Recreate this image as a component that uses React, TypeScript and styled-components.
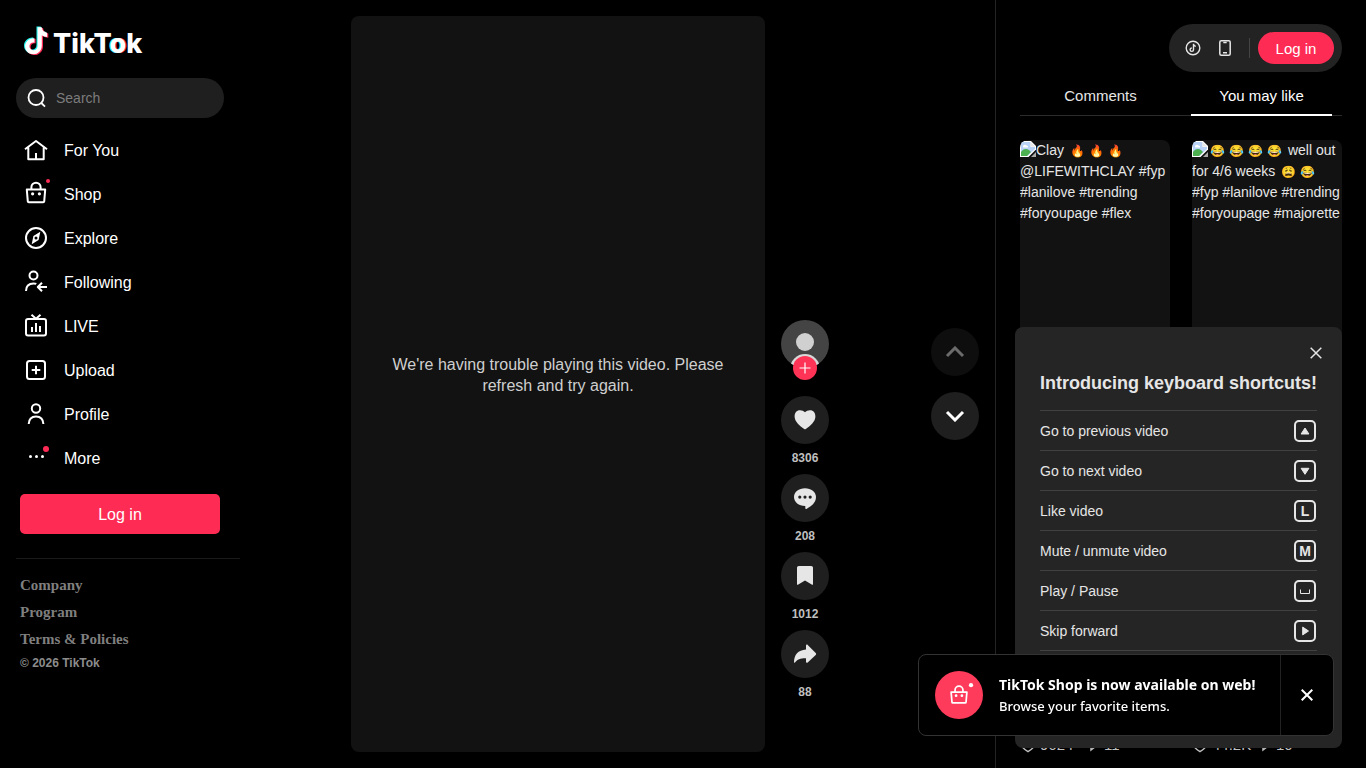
import React from "react";
import styled, { createGlobalStyle, css } from "styled-components";

const sans = `"Liberation Sans", Arial, sans-serif`;
const display = `"Noto Sans", "Open Sans", sans-serif`;

const GlobalStyle = createGlobalStyle`
  * { box-sizing: border-box; }
  body {
    margin: 0;
    background: #000;
    color: #fff;
    font-family: ${sans};
    overflow: hidden;
  }
  button { font-family: inherit; border: 0; cursor: pointer; padding: 0; color: inherit; background: none; }
  a { color: inherit; text-decoration: none; }
  svg { display: block; flex: none; }
`;

const Page = styled.div`
  display: flex;
  height: 100vh;
  overflow: hidden;
`;

/* ---------- left sidebar ---------- */

const Sidebar = styled.aside`
  flex: 0 0 240px;
  min-width: 0;
  display: flex;
  flex-direction: column;
  padding: 24px 0 16px 16px;
`;

const Logo = styled.a`
  display: flex;
  align-items: center;
  height: 34px;
  margin: 0 0 20px 7px;
`;

const Wordmark = styled.span`
  font: 800 27px/34px Inter, sans-serif;
  margin: 6px 0 0 4px;
`;

const TintedLetter = styled.span`
  text-shadow: -1px 0 #25f4ee, 1px 0 #fe2c55;
`;

const SearchBox = styled.label`
  display: flex;
  align-items: center;
  gap: 8px;
  height: 40px;
  margin-right: 16px;
  padding: 0 8px;
  border-radius: 20px;
  background: #1f1f1f;
`;

const SearchInput = styled.input`
  flex: 1;
  width: 100%;
  min-width: 0;
  padding: 0;
  border: 0;
  outline: 0;
  background: none;
  color: #fff;
  font: 14px/20px ${sans};
  &::placeholder { color: #7c7c7c; opacity: 1; }
`;

const Nav = styled.nav`
  display: flex;
  flex-direction: column;
  gap: 4px;
  margin-top: 13px;
`;

const NavLink = styled.a`
  display: flex;
  align-items: center;
  gap: 16px;
  height: 40px;
  padding-left: 8px;
  font-size: 16px;
  line-height: 24px;
`;

const NavIcon = styled.span`
  width: 24px;
  height: 24px;
  display: flex;
  align-items: flex-end;
  svg { overflow: visible; }
`;

const SidebarLogin = styled.button`
  height: 40px;
  margin: 15px 20px 24px 4px;
  padding-top: 2px;
  border-radius: 5px;
  background: #fe2c55;
  font-size: 16px;
`;

const Footer = styled.footer`
  display: flex;
  flex-direction: column;
  border-top: 1px solid #1a1a1a;
  padding: 13px 0 0 4px;
  color: #7f7f7f;
`;

const FooterLink = styled.a`
  font: bold 15px/27px "Liberation Serif", serif;
`;

const Copyright = styled.small`
  font: bold 12px/20px ${sans};
  color: #8c8c8c;
`;

/* ---------- feed ---------- */

const Feed = styled.main`
  flex: 1;
  min-width: 0;
  display: flex;
  padding: 16px 16px 16px 9px;
`;

const Stage = styled.section`
  flex: 1;
  display: flex;
  justify-content: center;
  gap: 16px;
`;

const Video = styled.div`
  height: 100%;
  aspect-ratio: 9 / 16;
  display: flex;
  align-items: center;
  justify-content: center;
  padding: 0 32px 18px;
  border-radius: 8px;
  background: #121212;
  color: #cfcfcf;
  font-size: 16px;
  line-height: 21px;
  text-align: center;
`;

const Actions = styled.div`
  display: flex;
  flex-direction: column;
  justify-content: flex-end;
  align-items: center;
  width: 48px;
  padding-bottom: 44px;
`;

const Avatar = styled.a`
  width: 48px;
  height: 48px;
`;

const Creator = styled.div`
  position: relative;
  margin-bottom: 28px;
`;

const FollowButton = styled.button`
  position: absolute;
  left: 12px;
  top: 36px;
  width: 24px;
  height: 24px;
  display: grid;
  place-items: center;
  border-radius: 50%;
  background: #ff3355;
`;

const RoundButton = styled.button<{ $dim?: boolean }>`
  width: 48px;
  height: 48px;
  display: grid;
  place-items: center;
  border-radius: 50%;
  background: ${(p) => (p.$dim ? "#0e0e0e" : "#1f1f1f")};
`;

const Count = styled.strong`
  margin: 6px 0 8px;
  font-size: 12px;
  line-height: 16px;
  color: #bfbfbf;
`;

const Pager = styled.div`
  display: flex;
  flex-direction: column;
  justify-content: center;
  gap: 16px;
`;

/* ---------- right panel ---------- */

const Panel = styled.aside`
  flex: 0 0 371px;
  display: flex;
  flex-direction: column;
  padding: 24px 24px 0;
  border-left: 1px solid #242424;
`;

const AccountBar = styled.div`
  align-self: flex-end;
  display: flex;
  align-items: center;
  height: 48px;
  padding: 0 8px;
  border-radius: 24px;
  background: #232323;
`;

const BarButton = styled.button`
  width: 32px;
  height: 32px;
  display: grid;
  place-items: center;
`;

const BarDivider = styled.span`
  width: 1px;
  height: 20px;
  margin: 0 8px;
  background: #444;
`;

const LoginPill = styled.button`
  width: 76px;
  height: 32px;
  border-radius: 16px;
  background: #fe2c55;
  font-size: 15px;
`;

const Tabs = styled.div`
  display: flex;
  height: 44px;
  margin-bottom: 24px;
  border-bottom: 1px solid #2b2b2b;
`;

const Tab = styled.button<{ $active?: boolean }>`
  flex: 1;
  height: 44px;
  margin: 0 10px;
  padding-top: 4px;
  font-size: 15px;
  color: #e6e6e6;
  border-bottom: 2px solid transparent;
  ${(p) => p.$active && css`color: #fff; border-bottom-color: #fff;`}
`;

const Suggestions = styled.div`
  display: grid;
  grid-template-columns: 1fr 1fr;
  gap: 27px 22px;
`;

const Suggestion = styled.article`
  min-width: 0;
  display: flex;
  flex-direction: column;
  gap: 8px;
`;

const Thumb = styled.a`
  display: block;
  height: 266px;
  border-radius: 8px;
  background: #121212;
  color: #e6e6e6;
  font: 14px/21px ${sans};
  overflow: hidden;
`;

const ThumbLine = styled.div`
  height: 21px;
  white-space: nowrap;
  svg { display: inline-block; vertical-align: -2px; }
`;

const Emoji = styled.span`
  display: inline-block;
  width: 19px;
  text-align: center;
  font-size: 12px;
  line-height: 16px;
`;

const Stats = styled.div`
  display: flex;
  align-items: center;
  gap: 6px;
  height: 20px;
  font-size: 15px;
  line-height: 20px;
  color: #bfbfbf;
`;

const Stat = styled.span`
  width: 60px;
  display: flex;
  align-items: center;
  gap: 4px;
`;

/* ---------- overlays ---------- */

const Shortcuts = styled.section`
  position: fixed;
  right: 24px;
  bottom: 20px;
  width: 327px;
  min-height: 421px;
  padding: 14px 25px 0;
  border-radius: 8px;
  background: #252525;
  color: #e6e6e6;
  display: flex;
  flex-direction: column;
`;

const ShortcutsClose = styled.button`
  align-self: flex-end;
  width: 24px;
  height: 24px;
  margin-right: -11px;
  display: grid;
  place-items: center;
`;

const ShortcutsTitle = styled.h2`
  margin: 6px 0 15px;
  font-size: 18px;
  line-height: 24px;
  white-space: nowrap;
`;

const ShortcutList = styled.ul`
  margin: 0;
  padding: 0;
  list-style: none;
  border-bottom: 1px solid #414141;
`;

const ShortcutRow = styled.li`
  display: flex;
  align-items: center;
  justify-content: space-between;
  height: 40px;
  border-top: 1px solid #414141;
  font-size: 14px;
`;

const Key = styled.kbd`
  width: 22px;
  height: 22px;
  margin-right: 1px;
  display: grid;
  place-items: center;
  border: 2px solid #e6e6e6;
  border-radius: 5px;
  font: bold 14px/18px ${sans};
`;

const Toast = styled.section`
  position: fixed;
  right: 32px;
  bottom: 32px;
  width: 416px;
  height: 82px;
  display: flex;
  border: 1px solid #333;
  border-radius: 8px;
  background: #000;
  font-family: ${display};
`;

const ToastBody = styled.div`
  flex: 1;
  display: flex;
  align-items: center;
  gap: 16px;
  padding-left: 16px;
`;

const ToastBadge = styled.span`
  width: 48px;
  height: 48px;
  display: grid;
  place-items: center;
  border-radius: 50%;
  background: #ff3b5c;
`;

const ToastTitle = styled.h3`
  margin: 0;
  font-size: 14px;
  font-weight: 700;
  line-height: 22px;
`;

const ToastText = styled.p`
  margin: 0;
  font-size: 13px;
  font-weight: 500;
  line-height: 20px;
`;

const ToastClose = styled.button`
  width: 53px;
  display: grid;
  place-items: center;
  border-left: 1px solid #222;
`;

/* ---------- icons ---------- */

const notePath = "M15 1h4.2c.3 3 2 5 5.3 5.4v4.3c-2 0-3.800-.6-5.300-1.700v10.200c0 5-3.700 8.800-8.400 8.800S2.500 24.500 2.500 20s4-8.600 9.300-8.100v4.400c-2.700-.6-5 1.200-5 3.700 0 2.300 1.700 4 4.100 4s4.100-1.700 4.100-4.500z";

const NoteMark = () => (
  <svg width="26" height="32" viewBox="0 0 26 32" aria-hidden="true">
    <path d={notePath} fill="#25f4ee" transform="translate(-1.500 .6)" />
    <path d={notePath} fill="#fe2c55" transform="translate(.8 2)" />
    <path d={notePath} fill="#fff" transform="translate(-.4 1.300)" />
  </svg>
);

const Line = ({ children, size = 24, width = 2 }: { children: React.ReactNode; size?: number; width?: number }) => (
  <svg width={size} height={size} viewBox="0 0 24 24" fill="none" stroke="currentColor" strokeWidth={width} strokeLinecap="butt" strokeLinejoin="round" aria-hidden="true">
    {children}
  </svg>
);

const Bag = () => (
  <>
    <path d="M2.800 8.600h18.400l-1 11.800a1 1 0 0 1-1 .9H4.800a1 1 0 0 1-1-.9z" />
    <path d="M7.400 8.400V6.300a4.600 4.600 0 0 1 9.200 0v2.100" />
    <circle cx="8.600" cy="12.800" r="1.600" fill="currentColor" stroke="none" />
    <circle cx="15.400" cy="12.800" r="1.600" fill="currentColor" stroke="none" />
  </>
);

const navItems: { label: string; icon: React.ReactNode }[] = [
  {
    label: "For You",
    icon: <Line><path d="M1 10.200 12 2l11 8.200M4.300 8.500v11.800h15.400V8.500M12 20V14" /></Line>,
  },
  {
    label: "Shop",
    icon: (
      <svg width="26" height="28" viewBox="0 0 26 28" fill="none" stroke="currentColor" strokeWidth="2" strokeLinejoin="round" aria-hidden="true">
        <g transform="translate(0 2)"><Bag /></g>
        <circle cx="24" cy="2" r="2" fill="#fe2c55" stroke="none" />
      </svg>
    ),
  },
  {
    label: "Explore",
    icon: (
      <Line>
        <circle cx="12" cy="11" r="10" />
        <path fillRule="evenodd" stroke="none" fill="currentColor" d="M16.300 4.700 14.600 13.100 7.700 17.300l1.700-8.400zM12 9.500a1.500 1.500 0 1 0 0 3 1.500 1.500 0 0 0 0-3z" />
      </Line>
    ),
  },
  {
    label: "Following",
    icon: (
      <Line>
        <circle cx="9.500" cy="4.500" r="4" />
        <path d="M2 20c0-5 2.700-7.600 7.500-7.600 1.200 0 2 .1 2.800.5M23 16h-8.500M18 11.800 13.800 16l4.200 4.200" />
      </Line>
    ),
  },
  {
    label: "LIVE",
    icon: (
      <Line>
        <rect x="2" y="4" width="20" height="16.500" rx="2" />
        <path d="m7.500-.2 4.500 4 4.500-4M8 12v5M12 8v9M16 11v6" />
      </Line>
    ),
  },
  {
    label: "Upload",
    icon: <Line><rect x="3" y="2" width="18" height="18" rx="2.500" /><path d="M12 6.700v8.600M7.700 11h8.600" /></Line>,
  },
  {
    label: "Profile",
    icon: <Line><circle cx="12" cy="5.500" r="4.200" /><path d="M4.700 21c.2-5 2.700-7.600 7.300-7.600s7.200 2.600 7.400 7.600" /></Line>,
  },
  {
    label: "More",
    icon: (
      <svg width="24" height="24" viewBox="0 0 24 24" fill="currentColor" aria-hidden="true">
        <circle cx="6.500" cy="9.500" r="1.500" /><circle cx="12.500" cy="9.500" r="1.500" /><circle cx="18.500" cy="9.500" r="1.500" />
        <circle cx="22" cy="2" r="3" fill="#fe2c55" />
      </svg>
    ),
  },
];

const Cross = ({ size = 12, width = 2 }: { size?: number; width?: number }) => (
  <svg width={size} height={size} viewBox="0 0 12 12" stroke="currentColor" strokeWidth={width} aria-hidden="true">
    <path d="m.7.7 10.600 10.600M11.300.7.7 11.300" />
  </svg>
);

const Solid = ({ d }: { d: string }) => (
  <svg width="24" height="24" viewBox="0 0 24 24" fill="#e6e6e6" fillRule="evenodd" aria-hidden="true"><path d={d} /></svg>
);

const actions = [
  { label: "Like", count: "8306", d: "M7 2.200c2 0 3.800.8 5 2 1.200-1.200 3-2 5-2 3.500 0 5.400 2.700 5.400 6.200 0 4.900-5.100 9.700-9.600 12.500a1.600 1.600 0 0 1-1.600 0C6.700 18.100 1.600 13.300 1.600 8.400 1.600 4.900 3.500 2.200 7 2.200z" },
  { label: "Comment", count: "208", d: "M12 2.200c6.200 0 11 3.700 11 8.900 0 5.600-4.800 9.500-9.500 11.800-.6.300-1.200 0-1.200-.6v-2.200H12C5.800 20.100 1 16.200 1 11.100S5.800 2.200 12 2.200zM6.800 9.500a1.600 1.600 0 1 0 0 3.200 1.600 1.600 0 0 0 0-3.200zm5.200 0a1.600 1.600 0 1 0 0 3.200 1.600 1.600 0 0 0 0-3.200zm5.200 0a1.600 1.600 0 1 0 0 3.200 1.600 1.600 0 0 0 0-3.200z" },
  { label: "Save", count: "1012", d: "M4 3.800C4 2.800 4.800 2 5.800 2h12.400c1 0 1.800.8 1.800 1.800v16.400c0 .4-.5.700-.9.500L12 16.500l-7.100 4.200c-.4.200-.9-.1-.9-.5z" },
  { label: "Share", count: "88", d: "M13 3.700c0-1 1-1.400 1.700-.8l8 8.100c.6.600.6 1.400 0 2l-8 7.400c-.7.700-1.700.2-1.700-.7v-3.400c-5.500-.1-8.600 1.100-11 4.200-.3.400-1 .2-1-.3C1 13 5 8.100 13 7.600z" },
];

const ImageMissing = () => (
  <svg width="16" height="16" viewBox="0 0 16 16" aria-hidden="true">
    <path d="M0 0h11l5 5v3.500L8.500 16H0z" fill="#fff" />
    <path d="M1 1h9.500v5H15v2L7.500 15H1z" fill="#b9d2f7" />
    <path d="M1 15v-4c2-3 5-4 8-2l2 2-4 4z" fill="#4caf50" />
    <path d="M3 5.500a2 2 0 0 1 3.500-1A1.500 1.500 0 0 1 8 6.500H3.200z" fill="#fff" />
    <path d="M10.500 1v4.500H15z" fill="#e8e8e8" />
    <path d="M11 15.900 16 11v4.900z" fill="#a9a9a9" />
  </svg>
);

const suggestions: { lines: string[]; likes?: string; plays?: string }[] = [
  { lines: ["Clay 🔥🔥🔥", "@LIFEWITHCLAY #fyp", "#lanilove #trending", "#foryoupage #flex"] },
  { lines: ["😂😂😂😂 well out", "for 4/6 weeks 😩😂", "#fyp #lanilove #trending", "#foryoupage #majorette"] },
  { lines: [], likes: "9624", plays: "11" },
  { lines: [], likes: "44.2K", plays: "10" },
];

const withEmoji = (line: string) =>
  line.split(/(\p{Extended_Pictographic})/u).map((part, i) => (i % 2 ? <Emoji key={i}>{part}</Emoji> : part));

const Glyph = ({ d, stroke }: { d: string; stroke?: boolean }) => (
  <svg width="12" height="12" viewBox="0 0 12 12" fill={stroke ? "none" : "currentColor"} stroke="currentColor" strokeWidth="1" strokeLinejoin="round" aria-hidden="true"><path d={d} /></svg>
);

const shortcuts: { label: string; key: React.ReactNode }[] = [
  { label: "Go to previous video", key: <Glyph d="M6 3 9.900 9H2.100z" /> },
  { label: "Go to next video", key: <Glyph d="M6 9.300 2.100 3.300h7.800z" /> },
  { label: "Like video", key: "L" },
  { label: "Mute / unmute video", key: "M" },
  { label: "Play / Pause", key: <Glyph stroke d="M1.500 4.500v4h9v-4" /> },
  { label: "Skip forward", key: <Glyph d="M9.500 6 3.700 2.100v7.800z" /> },
];

export default function App() {
  return (
    <Page>
      <GlobalStyle />
      <Sidebar>
        <Logo href="#" aria-label="TikTok">
          <NoteMark />
          <Wordmark>TikT<TintedLetter>o</TintedLetter>k</Wordmark>
        </Logo>
        <SearchBox>
          <Line width={1.8}><circle cx="12" cy="11.500" r="7.500" /><path d="m17.300 17 3.700 3.700" /></Line>
          <SearchInput type="search" placeholder="Search" aria-label="Search" />
        </SearchBox>
        <Nav>
          {navItems.map((item) => (
            <NavLink href="#" key={item.label}>
              <NavIcon>{item.icon}</NavIcon>
              {item.label}
            </NavLink>
          ))}
        </Nav>
        <SidebarLogin>Log in</SidebarLogin>
        <Footer>
          <FooterLink href="#">Company</FooterLink>
          <FooterLink href="#">Program</FooterLink>
          <FooterLink href="#">Terms &amp; Policies</FooterLink>
          <Copyright>© 2026 TikTok</Copyright>
        </Footer>
      </Sidebar>

      <Feed>
        <Stage>
          <Video>We're having trouble playing this video. Please refresh and try again.</Video>
          <Actions>
            <Creator>
              <Avatar href="#" aria-label="Creator profile">
                <svg width="48" height="48" viewBox="0 0 48 48" aria-hidden="true">
                  <clipPath id="avatar"><circle cx="24" cy="24" r="24" /></clipPath>
                  <g clipPath="url(#avatar)">
                    <rect width="48" height="48" fill="#444" />
                    <circle cx="24" cy="22" r="9" fill="#d0d0d0" />
                    <circle cx="24" cy="49" r="15" fill="#d8d8d8" />
                  </g>
                </svg>
              </Avatar>
              <FollowButton aria-label="Follow">
                <svg width="12" height="12" viewBox="0 0 12 12" stroke="#fff" strokeWidth="1.200" aria-hidden="true"><path d="M6 .5v11M.5 6h11" /></svg>
              </FollowButton>
            </Creator>
            {actions.map((a) => (
              <React.Fragment key={a.label}>
                <RoundButton aria-label={a.label}><Solid d={a.d} /></RoundButton>
                <Count>{a.count}</Count>
              </React.Fragment>
            ))}
          </Actions>
        </Stage>
        <Pager>
          <RoundButton $dim disabled aria-label="Previous video">
            <svg width="20" height="12" viewBox="0 0 20 12" fill="none" stroke="#6b6b6b" strokeWidth="3" aria-hidden="true"><path d="m2 10 8-8 8 8" /></svg>
          </RoundButton>
          <RoundButton aria-label="Next video">
            <svg width="20" height="12" viewBox="0 0 20 12" fill="none" stroke="#fff" strokeWidth="3" aria-hidden="true"><path d="m2 2 8 8 8-8" /></svg>
          </RoundButton>
        </Pager>
      </Feed>

      <Panel>
        <AccountBar>
          <BarButton aria-label="Get coins">
            <svg width="16" height="16" viewBox="0 0 16 16" fill="none" stroke="#e6e6e6" strokeWidth="1.400" aria-hidden="true">
              <circle cx="8" cy="8" r="6.800" />
              <path d="M8.500 3.800v5.900a1.700 1.700 0 1 1-1.700-1.700M8.500 4.200c.2 1.300 1 2 2.300 2.200" />
            </svg>
          </BarButton>
          <BarButton aria-label="Get app">
            <svg width="12" height="16" viewBox="0 0 12 16" fill="none" stroke="#e6e6e6" strokeWidth="1.500" aria-hidden="true">
              <rect x=".8" y=".8" width="10.400" height="14.400" rx="1.500" />
              <path d="M4.300 2.500h3.400M4 12.700h4" />
            </svg>
          </BarButton>
          <BarDivider />
          <LoginPill>Log in</LoginPill>
        </AccountBar>
        <Tabs role="tablist">
          <Tab role="tab" aria-selected="false">Comments</Tab>
          <Tab role="tab" aria-selected="true" $active>You may like</Tab>
        </Tabs>
        <Suggestions>
          {suggestions.map((s, i) => (
            <Suggestion key={i}>
              <Thumb href="#" aria-label="Suggested video">
                {s.lines.map((line, n) => (
                  <ThumbLine key={line}>{n === 0 && <ImageMissing />}{withEmoji(line)}</ThumbLine>
                ))}
              </Thumb>
              <Stats>
                {s.likes && (
                  <>
                    <Stat>
                      <svg width="16" height="16" viewBox="0 0 24 24" fill="none" stroke="currentColor" strokeWidth="2" aria-hidden="true"><path d="M7 3c2 0 3.800.8 5 2.300C13.200 3.800 15 3 17 3c3.500 0 5.500 2.700 5.500 6 0 5.500-5.500 10-10.500 13C7 19 1.500 14.500 1.500 9c0-3.300 2-6 5.500-6z" /></svg>
                      {s.likes}
                    </Stat>
                    <Stat>
                      <svg width="14" height="14" viewBox="0 0 14 14" fill="none" stroke="currentColor" strokeWidth="1.500" aria-hidden="true"><path d="M5 1.500v10.500L12 6.500z" /></svg>
                      {s.plays}
                    </Stat>
                  </>
                )}
              </Stats>
            </Suggestion>
          ))}
        </Suggestions>
      </Panel>

      <Shortcuts aria-label="Keyboard shortcuts">
        <ShortcutsClose aria-label="Close"><Cross width={1.5} /></ShortcutsClose>
        <ShortcutsTitle>Introducing keyboard shortcuts!</ShortcutsTitle>
        <ShortcutList>
          {shortcuts.map((s) => (
            <ShortcutRow key={s.label}>
              {s.label}
              <Key>{s.key}</Key>
            </ShortcutRow>
          ))}
        </ShortcutList>
      </Shortcuts>

      <Toast>
        <ToastBody>
          <ToastBadge>
            <svg width="30" height="24" viewBox="0 0 34 28" fill="none" stroke="currentColor" strokeWidth="2" strokeLinejoin="round" aria-hidden="true">
              <g transform="translate(5 2)"><Bag /></g>
              <circle cx="31" cy="2.500" r="2.500" fill="#fff" stroke="none" />
            </svg>
          </ToastBadge>
          <div>
            <ToastTitle>TikTok Shop is now available on web!</ToastTitle>
            <ToastText>Browse your favorite items.</ToastText>
          </div>
        </ToastBody>
        <ToastClose aria-label="Dismiss"><Cross /></ToastClose>
      </Toast>
    </Page>
  );
}
